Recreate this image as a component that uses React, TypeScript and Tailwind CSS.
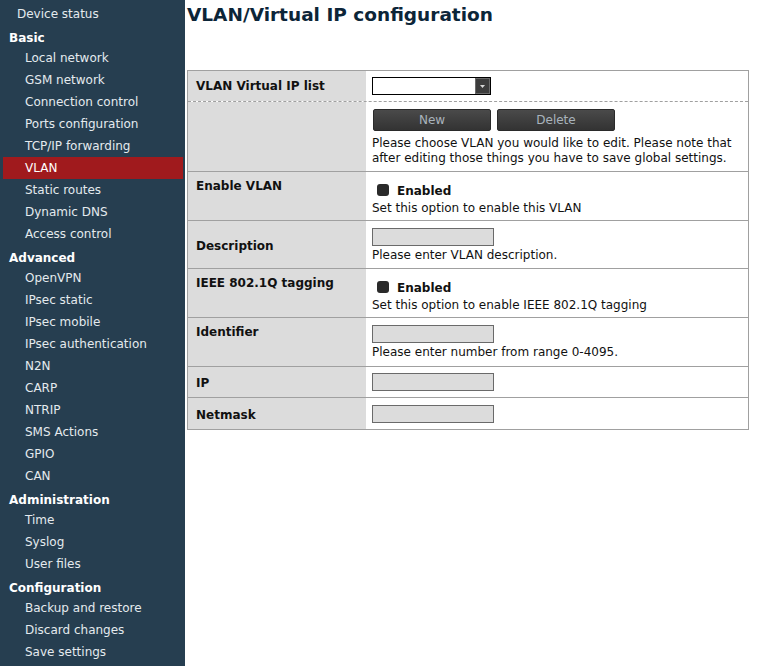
import type { ReactNode } from "react";

type NavEntry = { label: string; kind: "item" | "header" | "top"; active?: boolean };

const nav: NavEntry[] = [
  { label: "Device status", kind: "top" },
  { label: "Basic", kind: "header" },
  { label: "Local network", kind: "item" },
  { label: "GSM network", kind: "item" },
  { label: "Connection control", kind: "item" },
  { label: "Ports configuration", kind: "item" },
  { label: "TCP/IP forwarding", kind: "item" },
  { label: "VLAN", kind: "item", active: true },
  { label: "Static routes", kind: "item" },
  { label: "Dynamic DNS", kind: "item" },
  { label: "Access control", kind: "item" },
  { label: "Advanced", kind: "header" },
  { label: "OpenVPN", kind: "item" },
  { label: "IPsec static", kind: "item" },
  { label: "IPsec mobile", kind: "item" },
  { label: "IPsec authentication", kind: "item" },
  { label: "N2N", kind: "item" },
  { label: "CARP", kind: "item" },
  { label: "NTRIP", kind: "item" },
  { label: "SMS Actions", kind: "item" },
  { label: "GPIO", kind: "item" },
  { label: "CAN", kind: "item" },
  { label: "Administration", kind: "header" },
  { label: "Time", kind: "item" },
  { label: "Syslog", kind: "item" },
  { label: "User files", kind: "item" },
  { label: "Configuration", kind: "header" },
  { label: "Backup and restore", kind: "item" },
  { label: "Discard changes", kind: "item" },
  { label: "Save settings", kind: "item" },
];

function Sidebar() {
  return (
    <nav className="w-[185px] shrink-0 bg-[#263e50] pt-[3px] pb-[4px] text-[12px] text-[#e4eaee]">
      {nav.map((entry) => {
        if (entry.kind === "header") {
          return (
            <div
              key={entry.label}
              className="mt-[4px] flex h-[18px] items-center pl-[9px] font-bold text-white"
            >
              {entry.label}
            </div>
          );
        }
        return (
          <div
            key={entry.label}
            className={
              entry.active
                ? "ml-[3px] mr-[2px] flex h-[22px] items-center bg-[#a01a1d] pl-[22px] text-white"
                : entry.kind === "top"
                  ? "flex h-[22px] items-center pl-[17px]"
                  : "flex h-[22px] items-center pl-[25px]"
            }
          >
            {entry.label}
          </div>
        );
      })}
    </nav>
  );
}

function TextInput() {
  return <div className="h-[18px] w-[122px] border border-[#6a6a6a] bg-[#dcdcdc]" />;
}

function Checkbox({ label }: { label: string }) {
  return (
    <div className="flex h-[22px] items-center pl-[5px] pt-[2px]">
      <span className="-mt-[2px] h-[12px] w-[12px] rounded-[3px] bg-[#2a2a2a]" />
      <span className="ml-[8px] font-bold">{label}</span>
    </div>
  );
}

function Button({ children }: { children: ReactNode }) {
  return (
    <button className="h-[22px] w-[118px] rounded-[2px] border border-[#2a2a2a] bg-gradient-to-b from-[#4a4a4a] to-[#333333] text-[12px] text-[#a9b3bc]">
      {children}
    </button>
  );
}

type RowProps = {
  label?: string;
  labelClass?: string;
  className: string;
  cellClass: string;
  border?: "solid" | "dashed" | "none";
  children: ReactNode;
};

function Row({ label, labelClass = "items-center", className, cellClass, border = "solid", children }: RowProps) {
  const borderClass =
    border === "solid"
      ? "border-t border-[#a0a0a0]"
      : border === "dashed"
        ? "border-t border-dashed border-[#a0a0a0]"
        : "";
  return (
    <div className={`flex ${borderClass} ${className}`}>
      <div className={`flex w-[178px] shrink-0 bg-[#dcdcdc] pl-[8px] font-bold ${labelClass}`}>
        {label}
      </div>
      <div className={`flex-1 pl-[6px] ${cellClass}`}>{children}</div>
    </div>
  );
}

export default function App() {
  return (
    <div className="flex min-h-[666px] bg-white font-['DejaVu_Sans',sans-serif] text-[12px] leading-[15px] text-[#111111]">
      <Sidebar />
      <main className="ml-[2px] w-[562px]">
        <h1 className="pt-[4px] text-[18.5px] leading-[22px] font-bold text-[#0c2538]">
          VLAN/Virtual IP configuration
        </h1>
        <div className="mt-[44px] border border-[#a0a0a0]">
          <Row label="VLAN Virtual IP list" border="none" className="h-[30px]" cellClass="flex items-center">
            <div className="flex h-[18px] w-[119px] items-stretch border border-black bg-white">
              <div className="flex-1" />
              <div className="flex w-[15px] items-center justify-center border border-[#6a6a6a] bg-[#3c3c3c]">
                <svg width="5" height="3" viewBox="0 0 5 3">
                  <path d="M0 0 L5 0 L2.5 3 Z" fill="#d8d8d8" />
                </svg>
              </div>
            </div>
          </Row>
          <Row border="dashed" className="h-[70px]" cellClass="pt-[7px]">
            <div className="flex gap-[6px] pl-[1px]">
              <Button>New</Button>
              <Button>Delete</Button>
            </div>
            <p className="mt-[5px]">
              Please choose VLAN you would like to edit. Please note that
              <br />
              after editing those things you have to save global settings.
            </p>
          </Row>
          <Row label="Enable VLAN" labelClass="items-start pt-[7px]" className="h-[49px]" cellClass="pt-[7px]">
            <Checkbox label="Enabled" />
            <p>Set this option to enable this VLAN</p>
          </Row>
          <Row label="Description" labelClass="items-center pt-[3px]" className="h-[48px]" cellClass="pt-[7px]">
            <TextInput />
            <p className="mt-[2px]">Please enter VLAN description.</p>
          </Row>
          <Row label="IEEE 802.1Q tagging" labelClass="items-start pt-[7px]" className="h-[49px]" cellClass="pt-[7px]">
            <Checkbox label="Enabled" />
            <p>Set this option to enable IEEE 802.1Q tagging</p>
          </Row>
          <Row label="Identifier" labelClass="items-start pt-[7px]" className="h-[49px]" cellClass="pt-[7px]">
            <TextInput />
            <p className="mt-[2px]">Please enter number from range 0-4095.</p>
          </Row>
          <Row label="IP" labelClass="items-center pt-[2px]" className="h-[31px]" cellClass="flex items-center">
            <TextInput />
          </Row>
          <Row label="Netmask" labelClass="items-center pt-[3px]" className="h-[32px]" cellClass="flex items-center">
            <TextInput />
          </Row>
        </div>
      </main>
    </div>
  );
}
